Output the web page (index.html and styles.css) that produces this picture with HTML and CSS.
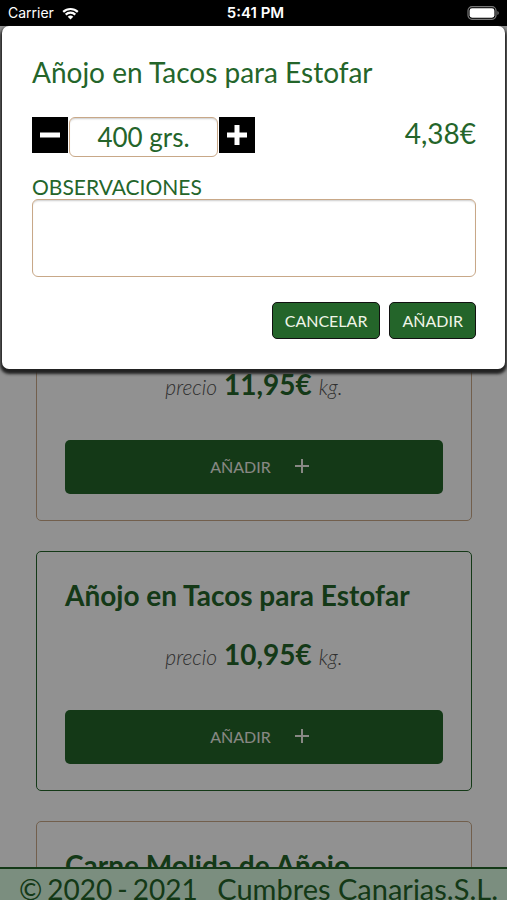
FILE: index.html
```html
<!DOCTYPE html>
<html lang="es">
<head>
<meta charset="utf-8">
<meta name="viewport" content="width=device-width, initial-scale=1">
<title>Cumbres Canarias</title>
<link rel="stylesheet" href="styles.css">
</head>
<body>
<header class="status">
  <div class="status-left">
    <span>Carrier</span>
    <svg class="wifi" viewBox="0 0 17 13" aria-hidden="true">
      <path d="M1.200 4.900a10.600 10.600 0 0 1 14.600 0M3.700 7.600a7 7 0 0 1 9.600 0" fill="none" stroke="#fff" stroke-width="2.200"/>
      <path d="M8.500 12.600 5.700 9.800a4 4 0 0 1 5.600 0z" fill="#fff"/>
    </svg>
  </div>
  <strong class="clock">5:41 PM</strong>
  <div class="status-right">
    <svg class="battery" viewBox="0 0 32 14" aria-hidden="true">
      <rect x="1" y="0.7" width="28" height="12.6" rx="4" fill="none" stroke="#777" stroke-width="1.2"/>
      <rect x="2.6" y="2.3" width="24.8" height="9.4" rx="2.4" fill="#fff"/>
      <path d="M30.400 5v4q1.400-.5 1.400-2t-1.400-2z" fill="#777"/>
    </svg>
  </div>
</header>

<div class="screen">
  <main class="products">
    <article class="card">
      <p class="price"><i>precio</i><strong>11,95€</strong><i>kg.</i></p>
      <button class="add" type="button">AÑADIR
        <svg viewBox="0 0 14 14" aria-hidden="true"><path d="M7 0v14M0 7h14" stroke="currentColor" stroke-width="2"/></svg>
      </button>
    </article>
    <article class="card card-active">
      <h2>Añojo en Tacos para Estofar</h2>
      <p class="price"><i>precio</i><strong>10,95€</strong><i>kg.</i></p>
      <button class="add" type="button">AÑADIR
        <svg viewBox="0 0 14 14" aria-hidden="true"><path d="M7 0v14M0 7h14" stroke="currentColor" stroke-width="2"/></svg>
      </button>
    </article>
    <article class="card">
      <h2>Carne Molida de Añojo</h2>
    </article>
  </main>
  <footer class="footer">
    <span>©</span><span>2020</span><span>-</span><span>2021</span>
    <span class="company">Cumbres Canarias.S.L.</span>
  </footer>

  <div class="backdrop">
    <form class="modal" role="dialog" aria-labelledby="modal-title">
      <h1 id="modal-title">Añojo en Tacos para Estofar</h1>
      <div class="row">
        <div class="stepper">
          <button type="button" class="step" aria-label="Menos">
            <svg viewBox="0 0 36 36" aria-hidden="true"><path d="M8 18h20" stroke="#fff" stroke-width="5"/></svg>
          </button>
          <input class="quantity" type="text" value="400 grs." aria-label="Cantidad">
          <button type="button" class="step" aria-label="Más">
            <svg viewBox="0 0 36 36" aria-hidden="true"><path d="M8 18h20M18 8v20" stroke="#fff" stroke-width="5"/></svg>
          </button>
        </div>
        <output class="total">4,38€</output>
      </div>
      <label for="notes">OBSERVACIONES</label>
      <textarea id="notes" class="notes"></textarea>
      <div class="actions">
        <button type="button" class="action">CANCELAR</button>
        <button type="submit" class="action">AÑADIR</button>
      </div>
    </form>
  </div>
</div>
</body>
</html>
```
FILE: styles.css
```css
* {
  box-sizing: border-box;
}

body {
  --green: #24652a;
  --tan: #c8a888;
  margin: 0;
  height: 100vh;
  display: flex;
  flex-direction: column;
  overflow: hidden;
  background: #fff;
  color: var(--green);
  font-family: Lato, sans-serif;
}

h1, h2, p {
  margin: 0;
}

button, input, textarea {
  font-family: inherit;
  margin: 0;
}

.status {
  display: flex;
  align-items: center;
  height: 26px;
  flex: none;
  padding: 0 8px;
  background: #000;
  color: #fff;
  font: 14px/26px Inter, sans-serif;
}

.status-left, .status-right {
  flex: 1;
  display: flex;
  align-items: center;
  gap: 8px;
}

.status-right {
  justify-content: flex-end;
}

.clock {
  padding-left: 4px;
  font-size: 15px;
  font-weight: 600;
}

.wifi {
  width: 17px;
  height: 13px;
}

.battery {
  width: 32px;
  height: 14px;
}

.screen {
  position: relative;
  flex: 1;
  min-height: 0;
  display: flex;
  flex-direction: column;
}

.products {
  flex: 1;
  min-height: 0;
  overflow: hidden;
  display: flex;
  flex-direction: column;
  gap: 30px;
  padding: 255px 35px 0 36px;
}

.card {
  flex: none;
  min-height: 240px;
  display: flex;
  flex-direction: column;
  padding: 27px 28px 26px;
  border: 1px solid var(--tan);
  border-radius: 5px;
}

.card-active {
  border-color: var(--green);
}

.card h2 {
  font-size: 28px;
  line-height: 32px;
  font-weight: 700;
}

.price {
  display: flex;
  justify-content: center;
  align-items: baseline;
  gap: 7px;
  margin-top: auto;
  padding-bottom: 37px;
  line-height: 32px;
}

.price i {
  color: #555;
  font-size: 21px;
  font-weight: 300;
}

.price strong {
  font-size: 28px;
  font-weight: 700;
}

.add {
  display: flex;
  align-items: center;
  justify-content: center;
  gap: 24px;
  height: 54px;
  padding: 0 0 2px 11px;
  border: 0;
  border-radius: 5px;
  background: var(--green);
  color: #f0f0e8;
  font-size: 16px;
}

.add svg {
  width: 14px;
  height: 14px;
}

.footer {
  flex: none;
  display: flex;
  gap: 5px;
  height: 33px;
  padding: 2px 9px 0 19px;
  border-top: 2px solid var(--green);
  background: #d8fadf;
  font-size: 28px;
  line-height: 36px;
  white-space: nowrap;
}

.company {
  margin-left: auto;
  font-size: 29px;
}

.backdrop {
  position: absolute;
  inset: 0;
  padding: 0 2px;
  background: rgba(0, 0, 0, 0.43);
}

.modal {
  display: flex;
  flex-direction: column;
  padding: 30px 29px 30px 30px;
  border-radius: 7px;
  background: #fff;
  box-shadow: 0 3px 3px 2px #222;
}

.modal h1 {
  font-size: 28px;
  line-height: 32px;
  font-weight: 400;
}

.row {
  display: flex;
  justify-content: space-between;
  align-items: flex-start;
  margin-top: 29px;
}

.stepper {
  display: flex;
  gap: 1px;
}

.step {
  width: 36px;
  height: 36px;
  padding: 0;
  border: 0;
  background: #000;
}

.step svg {
  display: block;
}

.quantity {
  width: 149px;
  height: 40px;
  padding: 0;
  border: 1px solid var(--tan);
  border-radius: 6px;
  box-shadow: inset 0 2px 2px -1px #ccc;
  color: var(--green);
  font-size: 26px;
  text-align: center;
}

.total {
  font-size: 28px;
  line-height: 32px;
}

.modal label {
  margin-top: 18px;
  font-size: 21px;
  line-height: 24px;
}

.notes {
  height: 78px;
  border: 1px solid var(--tan);
  border-radius: 6px;
  box-shadow: inset 0 2px 2px -1px #ccc;
  resize: none;
}

.actions {
  display: flex;
  justify-content: flex-end;
  gap: 9px;
  margin-top: 25px;
}

.action {
  height: 37px;
  padding: 0 12px;
  border: 1px solid #111;
  border-radius: 5px;
  background: var(--green);
  color: #f0f5e8;
  font-size: 16px;
}
```
